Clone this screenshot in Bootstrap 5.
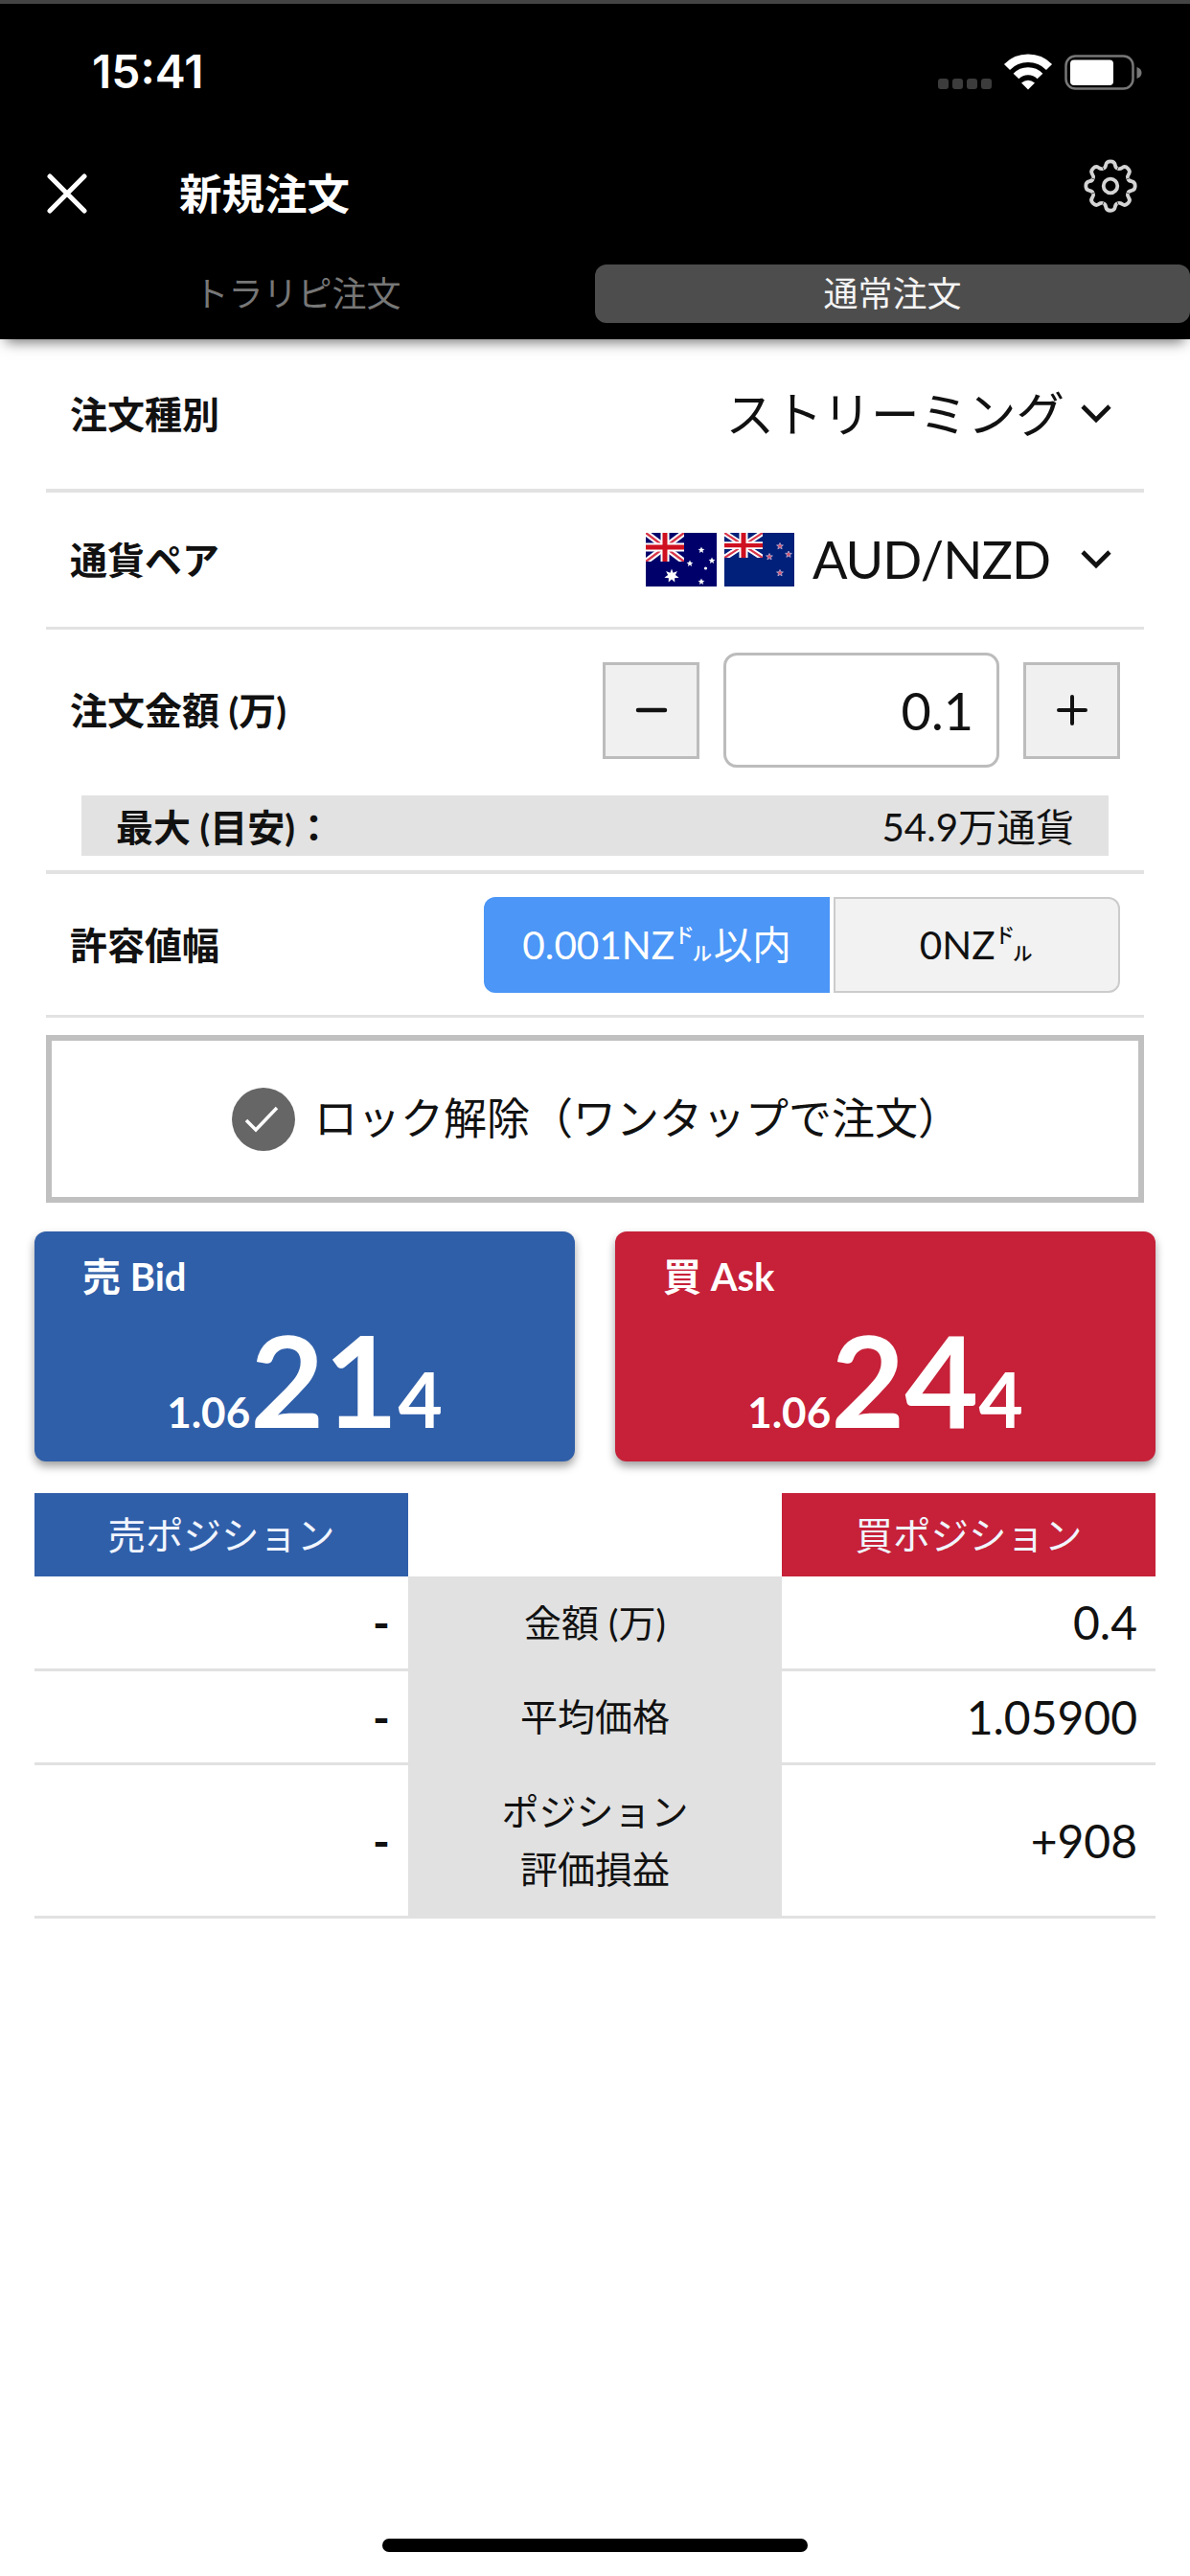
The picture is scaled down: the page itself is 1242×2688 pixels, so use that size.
<!DOCTYPE html>
<html lang="ja">
<head>
<meta charset="utf-8">
<meta name="viewport" content="width=device-width, initial-scale=1">
<title>新規注文</title>
<link href="https://cdn.jsdelivr.net/npm/bootstrap@5.3.0/dist/css/bootstrap.min.css" rel="stylesheet">
<style>
  body { font-family: Lato, "Noto Sans CJK JP", sans-serif; font-size: 39px; line-height: 1; color: #111; background: #fff; }
  svg { display: block; flex: none; }
  .screen { width: 1242px; height: 2688px; overflow: hidden; }
  .app-head { height: 354px; background: #000; border-top: 4px solid #444; box-shadow: 0 9px 13px -6px rgba(0,0,0,.55); position: relative; }
  .status { height: 142px; padding: 0 50px 0 96px; }
  .clock { font: 600 48px/60px Inter, sans-serif; }
  .title-bar { height: 130px; padding: 0 55px 18px 49px; }
  .title-text { font-size: 44.5px; font-weight: 700; line-height: 60px; margin-left: 96px; }
  .tab-item { height: 61px; font-size: 36px; line-height: 61px; color: #777; border-radius: 12px; }
  .tab-item.active { background: #4d4d4d; color: #f4f4f4; }
  .form-area { padding: 0 48px; }
  .form-line { border-bottom: 3px solid #e2e2e2; padding: 0 25px; }
  .lbl { font-weight: 700; line-height: 60px; color: #111; }
  .h-type { height: 160px; border-bottom-width: 4px; }
  .h-pair { height: 143px; }
  .h-amount { height: 255px; border-bottom-width: 4px; padding-top: 24px; }
  .h-slip { height: 150px; }
  .val-type { font-size: 50.5px; line-height: 70px; }
  .val-pair { font-size: 54px; line-height: 70px; letter-spacing: -1px; padding-left: 19px; }
  .pair-chev { margin-left: 31px; }
  .step { width: 101px; height: 101px; background: #f0f0f0; border: 3px solid #bcbcbc; border-radius: 0; }
  .amount { width: 288px; height: 120px; border: 3px solid #bcbcbc; border-radius: 14px; font-size: 54px; text-align: right; padding: 0 24px; margin: 0 25px; color: #111; }
  .max-line { height: 63px; background: #e2e2e2; margin: 29px 12px 0; padding: 0 36px; line-height: 66px; }
  .max-val { font-size: 40.3px; }
  .seg { height: 100px; border-radius: 12px; line-height: 96px; font-size: 40.5px; text-align: center; }
  .seg-on { width: 361px; background: #4b96f6; color: #fff; border-radius: 12px 0 0 12px; line-height: 100px; }
  .seg-off { width: 299px; background: #f2f2f2; border: 2px solid #ccc; border-radius: 0 12px 12px 0; }
  .lock { height: 175px; margin-top: 18px; border: 6px solid #c0c0c0; font-size: 45px; padding-left: 188px; gap: 20px; }
  .prices { margin-top: 30px; padding: 0 36px; gap: 42px; }
  .price { height: 240px; border-radius: 12px; padding: 19px 50px 0; color: #fff; font-weight: 700; box-shadow: 0 5px 10px rgba(0,0,0,.38); border: 0; }
  .bid { background: #305fa9; } .ask { background: #c62139; }
  .price-name { line-height: 56px; font-size: 40px; }
  .quote { line-height: 130px; margin-top: 14px; }
  .q1 { font-size: 44px; } .q2 { font-size: 133px; } .q3 { font-size: 80px; }
  .pos-table { display: grid; grid-template-columns: 390px 390px 390px; grid-template-rows: 87px 99px 98px 160px; margin: 33px 36px 0; }
  .pos-table > div { display: flex; align-items: center; justify-content: center; }
  .pos-table > .num { justify-content: flex-end; padding-right: 19px; border-bottom: 3px solid #e1e1e1; font-size: 48px; }
  .pos-table > .mid { background: #e1e1e1; line-height: 60px; text-align: center; padding-bottom: 4px; }
  .pos-head { font-size: 39.5px; color: #f1f5ff; }
  .home-bar { width: 444px; height: 14px; border-radius: 7px; background: #000; margin: 647px auto 0; }
</style>
<script src="https://cdn.jsdelivr.net/npm/bootstrap@5.3.0/dist/js/bootstrap.bundle.min.js"></script>
</head>
<body>
<div class="screen">
  <header class="app-head text-white">
    <div class="status d-flex justify-content-between align-items-center">
      <div class="clock">15:41</div>
      <svg width="214" height="40" viewBox="978 54 214 40">
        <g fill="#3c3c3c"><rect x="979" y="81" width="11" height="11" rx="3"/><rect x="994" y="81" width="11" height="11" rx="3"/><rect x="1009" y="81" width="11" height="11" rx="3"/><rect x="1024" y="81" width="11" height="11" rx="3"/></g>
        <g fill="none" stroke="#fff"><path d="M1051 69a31 31 0 0 1 44 0" stroke-width="8.500"/><path d="M1060.500 78.500a17.500 17.500 0 0 1 25 0" stroke-width="8"/></g>
        <path d="M1066 85.500q7-5.500 14 0l-7 7z" fill="#fff"/>
        <rect x="1112.500" y="57.500" width="70" height="34" rx="10" fill="none" stroke="#777" stroke-width="2.500"/>
        <rect x="1117" y="61.500" width="45" height="26.500" rx="4" fill="#fff"/>
        <path d="M1186.500 69q5 1.500 5 6t-5 6z" fill="#777"/>
      </svg>
    </div>
    <div class="title-bar d-flex align-items-center">
      <svg width="42" height="42" viewBox="0 0 42 42" stroke="#fff" stroke-width="5" stroke-linecap="round"><path d="M3 3l36 36M39 3L3 39"/></svg>
      <div class="title-text">新規注文</div>
      <svg class="ms-auto mb-3" width="56" height="56" viewBox="-28 -28 56 56" fill="none" stroke="#d4d4d4" stroke-width="3.800">
        <defs><path id="tooth" d="M-7.300-18.300C-5-19.200-5-21-4.700-22.500C-3.800-26.800 3.800-26.800 4.700-22.500C5-21 5-19.200 7.300-18.300"/></defs>
        <use href="#tooth"/><use href="#tooth" transform="rotate(45)"/><use href="#tooth" transform="rotate(90)"/><use href="#tooth" transform="rotate(135)"/><use href="#tooth" transform="rotate(180)"/><use href="#tooth" transform="rotate(225)"/><use href="#tooth" transform="rotate(270)"/><use href="#tooth" transform="rotate(315)"/>
        <circle r="7.300"/>
      </svg>
    </div>
    <nav class="d-flex text-center">
      <div class="tab-item w-50">トラリピ注文</div>
      <div class="tab-item active w-50">通常注文</div>
    </nav>
  </header>

  <main>
    <div class="form-area">
      <div class="form-line h-type d-flex align-items-center">
        <div class="lbl">注文種別</div>
        <div class="val-type ms-auto">ストリーミング</div>
        <svg class="ms-3 me-2" width="34" height="22" viewBox="0 0 34 22" fill="none" stroke="#111" stroke-width="4.600"><path d="M3 3l14 14L31 3"/></svg>
      </div>
      <div class="form-line h-pair d-flex align-items-center">
        <div class="lbl">通貨ペア</div>
        <svg class="ms-auto" width="155" height="56" viewBox="0 0 155 56">
          <defs>
            <g id="jack">
              <path d="M0 0L40 30M40 0L0 30" stroke="#fff" stroke-width="6.500"/>
              <path d="M0 0L40 30M40 0L0 30" stroke="#d8364a" stroke-width="2.400"/>
              <path d="M20 0V30M0 15H40" stroke="#fff" stroke-width="9"/>
              <path d="M20 0V30M0 15H40" stroke="#cf1020" stroke-width="5"/>
            </g>
            <clipPath id="canton"><rect width="40" height="30"/></clipPath>
            <path id="star" d="M0-3.500L1-1.200L3.400-1.100L1.500.5L2.100 2.900L0 1.500L-2.100 2.900L-1.500.5L-3.400-1.100L-1-1.200z"/>
          </defs>
          <rect width="74" height="56" fill="#00006b"/>
          <g clip-path="url(#canton)"><use href="#jack"/></g>
          <path fill="#fff" d="M27 37.500l1.600 4.300 4.300-1.800-2 4.100 3.700 2.600-4.500.5.200 4.400-3.300-3.100-3.300 3.100.2-4.400-4.500-.5 3.700-2.600-2-4.100 4.300 1.800z"/>
          <g fill="#fff"><use href="#star" x="58" y="18"/><use href="#star" x="46" y="32"/><use href="#star" x="69" y="29"/><use href="#star" x="58" y="51"/><circle cx="62.500" cy="37" r="1.600"/></g>
          <g transform="translate(82)">
            <rect width="73" height="56" fill="#002079"/>
            <g transform="scale(1 .87)"><g clip-path="url(#canton)"><use href="#jack"/></g></g>
            <g fill="#d0506e" stroke="#b8b0d8" stroke-width=".8"><use href="#star" x="58" y="14"/><use href="#star" x="47" y="25"/><use href="#star" x="67" y="22.500"/><use href="#star" x="58" y="42"/></g>
          </g>
        </svg>
        <div class="val-pair">AUD/NZD</div>
        <svg class="me-2 pair-chev" width="34" height="22" viewBox="0 0 34 22" fill="none" stroke="#111" stroke-width="4.600"><path d="M3 3l14 14L31 3"/></svg>
      </div>
      <div class="form-line h-amount">
        <div class="d-flex align-items-center">
          <div class="lbl me-auto">注文金額 (万)</div>
          <button class="step p-0 d-flex align-items-center justify-content-center"><svg width="34" height="34" stroke="#111" stroke-width="4.500" stroke-linecap="round"><path d="M3 17H31"/></svg></button>
          <input class="amount" value="0.1">
          <button class="step p-0 d-flex align-items-center justify-content-center"><svg width="34" height="34" stroke="#111" stroke-width="4" stroke-linecap="round"><path d="M3 17H31M17 3V31"/></svg></button>
        </div>
        <div class="max-line d-flex justify-content-between">
          <div class="fw-bold">最大 (目安)：</div>
          <div class="max-val">54.9万通貨</div>
        </div>
      </div>
      <div class="form-line h-slip d-flex align-items-center">
        <div class="lbl me-auto">許容値幅</div>
        <div class="seg seg-on">0.001NZ㌦以内</div>
        <div class="seg seg-off ms-1">0NZ㌦</div>
      </div>
      <div class="lock d-flex align-items-center">
        <svg width="66" height="66" viewBox="0 0 66 66"><circle cx="33" cy="33" r="33" fill="#666"/><path d="M15 34l10 10 22-23" fill="none" stroke="#fff" stroke-width="3.500"/></svg>
        <div>ロック解除（ワンタップで注文）</div>
      </div>
    </div>

    <div class="prices d-flex">
      <div class="price bid flex-fill">
        <div class="price-name">売 Bid</div>
        <div class="quote text-center"><span class="q1">1.06</span><span class="q2">21</span><span class="q3">4</span></div>
      </div>
      <div class="price ask flex-fill">
        <div class="price-name">買 Ask</div>
        <div class="quote text-center"><span class="q1">1.06</span><span class="q2">24</span><span class="q3">4</span></div>
      </div>
    </div>

    <div class="pos-table">
      <div class="pos-head bid">売ポジション</div><div></div><div class="pos-head ask">買ポジション</div>
      <div class="num fw-bold">-</div><div class="mid">金額 (万)</div><div class="num">0.4</div>
      <div class="num fw-bold">-</div><div class="mid">平均価格</div><div class="num">1.05900</div>
      <div class="num fw-bold">-</div><div class="mid">ポジション<br>評価損益</div><div class="num">+908</div>
    </div>
  </main>
  <div class="home-bar"></div>
</div>
</body>
</html>
